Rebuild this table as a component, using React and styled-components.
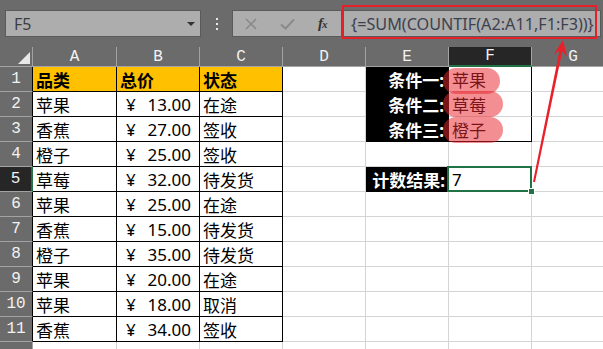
import React from "react";
import styled, { createGlobalStyle, css } from "styled-components";

const GRID = "#d4d4d4";
const GREEN = "#217346";
const HEAD_LINE = "#a3a3a3";
const CJK = '"Noto Sans", "Noto Sans CJK SC", sans-serif';

const Global = createGlobalStyle`
  html, body { margin: 0; padding: 0; background: #6b6b6b; overflow: hidden; }
`;

const Frame = styled.div`
  position: relative;
  width: 603px;
  height: 349px;
  overflow: hidden;
  background: #fff;
`;

const Toolbar = styled.div`
  box-sizing: border-box;
  height: 47px;
  padding: 10px 0 0 5px;
  display: flex;
  align-items: flex-start;
  background: #6b6b6b;
`;

const BoxBase = css`
  box-sizing: border-box;
  height: 27px;
  background: #adadad;
  border: 1px solid #5a5a5a;
  display: flex;
  align-items: center;
`;

const NameBox = styled.div`
  ${BoxBase};
  width: 196px;
  padding: 0 5px 0 8px;
  justify-content: space-between;
  font: 16px ${CJK};
  color: #3d3d3d;
`;

const Caret = styled.span`
  width: 0;
  height: 0;
  border-left: 4px solid transparent;
  border-right: 4px solid transparent;
  border-top: 4px solid #333;
`;

const Dots = styled.div`
  width: 31px;
  height: 27px;
  display: flex;
  flex-direction: column;
  align-items: center;
  justify-content: center;
  gap: 3px;
`;

const Dot = styled.span`
  width: 2px;
  height: 2px;
  background: #eaeaea;
`;

const FuncBox = styled.div`
  ${BoxBase};
  width: 110px;
  padding-left: 12px;
  gap: 23px;
`;

const Fx = styled.span`
  font: italic bold 15px "Liberation Serif", serif;
  color: #333;
  letter-spacing: -1px;
  & small { font-size: 11px; }
`;

const FormulaBox = styled.div`
  ${BoxBase};
  position: relative;
  flex: 1;
  margin-right: 2px;
  border-left: none;
  padding-left: 9px;
  font: 16.2px ${CJK};
  color: #3c4150;
  &::after {
    content: "";
    position: absolute;
    left: 0;
    right: 3px;
    top: -6px;
    bottom: -3px;
    border: 2px solid #e5202b;
  }
`;

const Sheet = styled.div`
  display: grid;
  grid-template-columns: 33px 84px repeat(6, 83px);
  grid-template-rows: 20px repeat(12, 25px);
  width: 615px;
`;

const HeadBase = css`
  box-sizing: border-box;
  display: flex;
  align-items: center;
  justify-content: center;
  background: #6b6b6b;
  color: #f2f2f2;
  font: 16px "Liberation Mono", monospace;
`;

const Corner = styled.div`
  ${HeadBase};
  position: relative;
  border-right: 1px solid ${HEAD_LINE};
  border-bottom: 1px solid ${HEAD_LINE};
  &::after {
    content: "";
    position: absolute;
    right: 2px;
    bottom: 2px;
    border-left: 12px solid transparent;
    border-bottom: 12px solid #e8e8e8;
  }
`;

const ColHead = styled.div`
  ${HeadBase};
  border-right: 1px solid ${HEAD_LINE};
  border-bottom: ${(p) => (p.$active ? `2px solid ${GREEN}` : `1px solid ${HEAD_LINE}`)};
  background: ${(p) => (p.$active ? "#262626" : "#6b6b6b")};
`;

const RowHead = styled.div`
  ${HeadBase};
  border-bottom: 1px solid ${HEAD_LINE};
  border-right: ${(p) => (p.$active ? `2px solid ${GREEN}` : `1px solid ${p.$edge}`)};
  background: ${(p) => (p.$active ? "#262626" : "#6b6b6b")};
`;

const Cell = styled.div`
  position: relative;
  box-sizing: border-box;
  display: flex;
  align-items: center;
  justify-content: ${(p) => p.$justify || "flex-start"};
  padding: ${(p) => p.$pad || "0 3px"};
  border-right: 1px solid ${(p) => p.$right || GRID};
  border-bottom: 1px solid ${(p) => p.$bottom || GRID};
  background: ${(p) => p.$bg || "#fff"};
  color: ${(p) => p.$color || "#000"};
  font: 17px ${CJK};
  font-weight: ${(p) => (p.$bold ? 700 : 400)};
  white-space: nowrap;
  ${(p) =>
    p.$selected &&
    css`
      &::after {
        content: "";
        position: absolute;
        left: -2px;
        top: -1px;
        right: -1px;
        bottom: -1px;
        border: 2px solid ${GREEN};
        z-index: 2;
      }
      &::before {
        content: "";
        position: absolute;
        right: -4px;
        bottom: -4px;
        width: 5px;
        height: 5px;
        background: ${GREEN};
        border: 1px solid #fff;
        z-index: 3;
      }
    `}
`;

const Blob = styled.span`
  position: absolute;
  left: -6px;
  top: ${(p) => p.$top}px;
  width: ${(p) => p.$w}px;
  height: 26px;
  border-radius: 13px;
  background: rgba(232, 38, 48, 0.52);
  z-index: 1;
`;

const Overlay = styled.svg`
  position: absolute;
  left: 0;
  top: 0;
  pointer-events: none;
  z-index: 5;
`;

const data = [
  ["苹果", 13, "在途"],
  ["香蕉", 27, "签收"],
  ["橙子", 25, "签收"],
  ["草莓", 32, "待发货"],
  ["苹果", 25, "在途"],
  ["香蕉", 15, "待发货"],
  ["橙子", 35, "待发货"],
  ["苹果", 20, "在途"],
  ["苹果", 18, "取消"],
  ["香蕉", 34, "签收"],
];

const conditions = {
  1: { label: "条件一:", value: "苹果", w: 57, top: 1 },
  2: { label: "条件二:", value: "草莓", w: 60, top: -1 },
  3: { label: "条件三:", value: "橙子", w: 60, top: 0 },
};

const cols = ["A", "B", "C", "D", "E", "F", "G"];

function renderRow(r) {
  const cells = [];
  const inTable = r <= 11;
  cells.push(
    <RowHead key="h" $active={r === 5} $edge={inTable ? "#000" : HEAD_LINE}>
      {r <= 11 ? r : null}
    </RowHead>
  );
  if (r === 1) {
    ["品类", "总价", "状态"].forEach((t, i) =>
      cells.push(
        <Cell key={"t" + i} $bg="#ffc000" $bold $right="#000" $bottom="#000">
          {t}
        </Cell>
      )
    );
  } else if (r <= 11) {
    const [name, price, status] = data[r - 2];
    cells.push(
      <Cell key="a" $right="#000" $bottom="#000">
        {name}
      </Cell>
    );
    cells.push(
      <Cell key="b" $right="#000" $bottom="#000" $justify="space-between" $pad="0 8px 0 9px">
        <span>¥</span>
        <span>{price.toFixed(2)}</span>
      </Cell>
    );
    cells.push(
      <Cell key="c" $right="#000" $bottom="#000">
        {status}
      </Cell>
    );
  } else {
    cells.push(<Cell key="a" />, <Cell key="b" />, <Cell key="c" />);
  }
  cells.push(<Cell key="d" />);
  const cond = conditions[r];
  if (cond) {
    cells.push(
      <Cell key="e" $bg="#000" $color="#fff" $bold $right="#000" $bottom="#000" $justify="flex-end" $pad="0 4px 0 0">
        {cond.label}
      </Cell>
    );
    cells.push(
      <Cell key="f" $right="#000" $bottom={r === 3 ? "#000" : GRID}>
        {cond.value}
        <Blob $w={cond.w} $top={cond.top} />
      </Cell>
    );
  } else if (r === 5) {
    cells.push(
      <Cell key="e" $bg="#000" $color="#fff" $bold $right="#000" $bottom="#000" $justify="flex-end" $pad="0 3px 0 0">
        计数结果:
      </Cell>
    );
    cells.push(
      <Cell key="f" $selected>
        7
      </Cell>
    );
  } else {
    cells.push(<Cell key="e" />, <Cell key="f" />);
  }
  cells.push(<Cell key="g" />);
  return <React.Fragment key={r}>{cells}</React.Fragment>;
}

export default function App() {
  return (
    <Frame>
      <Global />
      <Toolbar>
        <NameBox>
          <span>F5</span>
          <Caret />
        </NameBox>
        <Dots>
          <Dot />
          <Dot />
          <Dot />
        </Dots>
        <FuncBox>
          <svg width="12" height="12" viewBox="0 0 12 12">
            <path d="M1 1L11 11M11 1L1 11" stroke="#8a8a8a" strokeWidth="1.6" fill="none" />
          </svg>
          <svg width="15" height="12" viewBox="0 0 15 12">
            <path d="M1 6.5L5.5 10.5L14 1.5" stroke="#8a8a8a" strokeWidth="2" fill="none" />
          </svg>
          <Fx>
            f<small>x</small>
          </Fx>
        </FuncBox>
        <FormulaBox>{"{=SUM(COUNTIF(A2:A11,F1:F3))}"}</FormulaBox>
      </Toolbar>
      <Sheet>
        <Corner />
        {cols.map((c) => (
          <ColHead key={c} $active={c === "F"}>
            {c}
          </ColHead>
        ))}
        {Array.from({ length: 12 }, (_, i) => renderRow(i + 1))}
      </Sheet>
      <Overlay width="603" height="349" viewBox="0 0 603 349">
        <polygon
          points="563,40 567,56.5 562.2,51.5 535,182.3 533,181.7 559.4,50.9 554,54"
          fill="#e8212b"
        />
      </Overlay>
    </Frame>
  );
}
